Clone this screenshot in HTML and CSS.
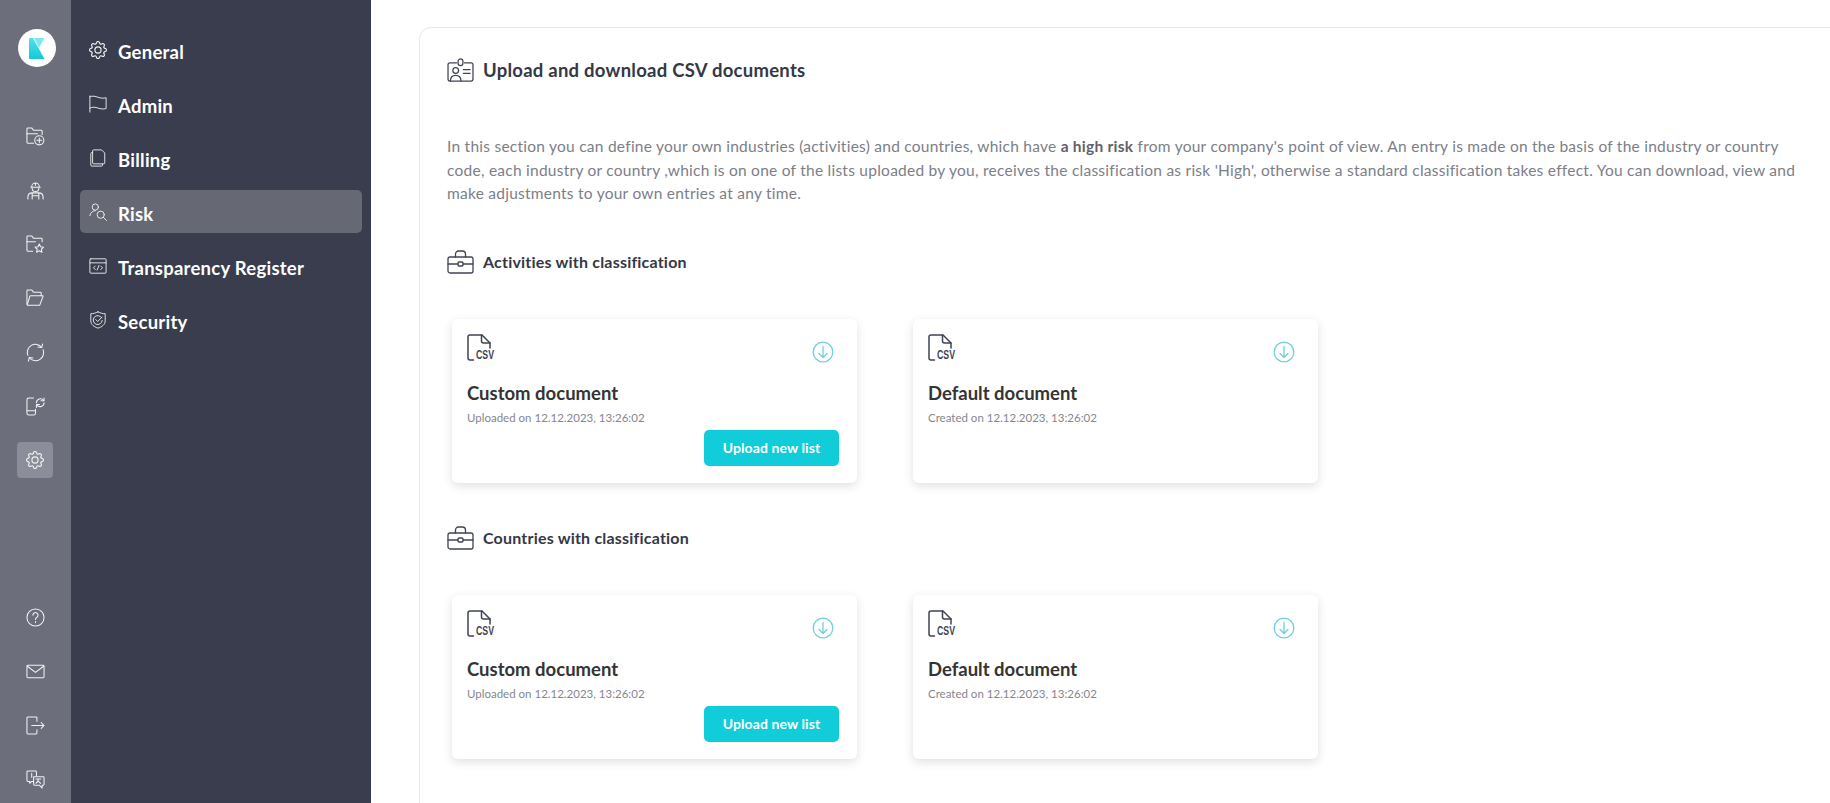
FILE: index.html
```html
<!DOCTYPE html>
<html lang="en">
<head>
<meta charset="utf-8">
<title>Risk settings</title>
<link rel="stylesheet" href="styles.css">
</head>
<body>
<svg class="defs" width="0" height="0" aria-hidden="true">
  <defs>
    <linearGradient id="logo-grad" x1="0" y1="0" x2="0" y2="1">
      <stop offset="0" stop-color="#55dfe9"/>
      <stop offset="1" stop-color="#12c9d7"/>
    </linearGradient>
    <symbol id="gear" viewBox="0 0 16 16">
      <path d="M8 4.754a3.246 3.246 0 1 0 0 6.492 3.246 3.246 0 0 0 0-6.492zM5.754 8a2.246 2.246 0 1 1 4.492 0 2.246 2.246 0 0 1-4.492 0z"/>
      <path d="M9.796 1.343c-.527-1.790-3.065-1.790-3.592 0l-.094.319a.873.873 0 0 1-1.255.52l-.292-.16c-1.640-.892-3.433.902-2.540 2.541l.159.292a.873.873 0 0 1-.52 1.255l-.319.094c-1.790.527-1.790 3.065 0 3.592l.319.094a.873.873 0 0 1 .52 1.255l-.16.292c-.892 1.640.901 3.434 2.541 2.540l.292-.159a.873.873 0 0 1 1.255.52l.094.319c.527 1.790 3.065 1.790 3.592 0l.094-.319a.873.873 0 0 1 1.255-.52l.292.16c1.640.893 3.434-.902 2.540-2.541l-.159-.292a.873.873 0 0 1 .52-1.255l.319-.094c1.790-.527 1.790-3.065 0-3.592l-.319-.094a.873.873 0 0 1-.52-1.255l.16-.292c.893-1.640-.902-3.433-2.541-2.540l-.292.159a.873.873 0 0 1-1.255-.52l-.094-.319zm-2.633.283c.246-.835 1.428-.835 1.674 0l.094.319a1.873 1.873 0 0 0 2.693 1.115l.291-.16c.764-.415 1.600.42 1.184 1.185l-.159.292a1.873 1.873 0 0 0 1.116 2.692l.318.094c.835.246.835 1.428 0 1.674l-.319.094a1.873 1.873 0 0 0-1.115 2.693l.16.291c.415.764-.42 1.600-1.185 1.184l-.291-.159a1.873 1.873 0 0 0-2.693 1.116l-.094.318c-.246.835-1.428.835-1.674 0l-.094-.319a1.873 1.873 0 0 0-2.692-1.115l-.292.16c-.764.415-1.600-.42-1.184-1.185l.159-.291A1.873 1.873 0 0 0 1.945 8.930l-.319-.094c-.835-.246-.835-1.428 0-1.674l.319-.094A1.873 1.873 0 0 0 3.060 4.377l-.16-.292c-.415-.764.42-1.600 1.185-1.184l.292.159a1.873 1.873 0 0 0 2.692-1.115l.094-.319z"/>
    </symbol>
    <symbol id="file-csv" viewBox="0 0 24 27">
      <path d="M6.500 26H3a2 2 0 0 1-2-2V3a2 2 0 0 1 2-2h12l8 8v5"/>
      <path d="M14.500 1v6a2 2 0 0 0 2 2H23"/>
    </symbol>
    <symbol id="case" viewBox="0 0 27 24">
      <rect x="1" y="7" width="25" height="16" rx="2"/>
      <path d="M8.500 7V4a3 3 0 0 1 3-3h4a3 3 0 0 1 3 3v3"/>
      <path d="M1 14h10M16 14h10"/>
      <rect x="11" y="12" width="5" height="4" rx="1"/>
    </symbol>
    <symbol id="dl" viewBox="0 0 22 22">
      <circle cx="11" cy="11" r="9.800"/>
      <path d="M11 5.500v10.500M7 12.500l4 4 4-4"/>
    </symbol>
  </defs>
</svg>
<div class="app">
  <aside class="rail">
    <div class="rail-group">
      <div class="logo">
        <svg viewBox="0 0 16 21" width="16" height="21">
          <path d="M0 1a1 1 0 0 1 1-1h3l11.500 21H1a1 1 0 0 1-1-1z" fill="url(#logo-grad)"/>
          <path d="M5 0h10.500L10 10z" fill="#7de8ef"/>
        </svg>
      </div>
      <div class="rail-icons">
        <a class="rail-btn"><svg class="ri" viewBox="0 0 20 20"><path d="M8 17H2a1 1 0 0 1-1-1V2a1 1 0 0 1 1-1h4l2 2.500h8a1 1 0 0 1 1 1V8"/><path d="M1 7h11"/><circle cx="14" cy="14" r="4.800"/><path d="M14 11.500v5M11.500 14h5"/></svg></a>
        <a class="rail-btn"><svg class="ri" viewBox="0 0 20 20"><path d="M6 6a4 4 0 0 1 8 0M5 6.500h10M10 2v2.500"/><path d="M6.500 7.500a3.500 3.500 0 0 0 7 0"/><path d="M2 19v-2.500a4.500 4.500 0 0 1 4.500-4h7a4.500 4.500 0 0 1 4.500 4V19M6.500 12.500V19M13.500 12.500V19M6.500 15.500h7"/></svg></a>
        <a class="rail-btn"><svg class="ri" viewBox="0 0 20 20"><path d="M7 17H2a1 1 0 0 1-1-1V2a1 1 0 0 1 1-1h4l2 2.500h8a1 1 0 0 1 1 1V7"/><path d="M1 7h9"/><path d="M14 9.500l1.400 2.900 3.100.4-2.300 2.200.6 3.100-2.800-1.500-2.800 1.500.6-3.100-2.300-2.200 3.100-.4z"/></svg></a>
        <a class="rail-btn"><svg class="ri" viewBox="0 0 20 20"><path d="M2 17a1 1 0 0 1-1-1V2a1 1 0 0 1 1-1h4l2 2.500h7a1 1 0 0 1 1 1V7"/><path d="M2 17h12.500l3.500-9.500a.5.5 0 0 0-.5-.5H5a1 1 0 0 0-1 .7L1.500 16"/></svg></a>
        <a class="rail-btn"><svg class="ri" viewBox="0 0 20 20"><path d="M16.500 4.500A8.500 8.500 0 0 0 2 13M3.500 15.500A8.500 8.500 0 0 0 18 7"/><path d="M17.500 1l-1 3.800-3.800-.6M2.500 19l1-3.800 3.800.6"/></svg></a>
        <a class="rail-btn"><svg class="ri" viewBox="0 0 20 20"><path d="M8 1H3a2 2 0 0 0-2 2v14a2 2 0 0 0 2 2h5a2 2 0 0 0 2-2v-4"/><path d="M1 14.500h9"/><path d="M11 6a4.200 4.200 0 0 1 7.500-2.500M19 6a4.200 4.200 0 0 1-7.500 2.500"/><path d="M19 1v3h-3.200M11 11V8h3.200"/></svg></a>
        <a class="rail-btn is-active"><svg class="gear"><use href="#gear"/></svg></a>
      </div>
    </div>
    <div class="rail-icons">
      <a class="rail-btn"><svg class="ri" viewBox="0 0 20 20"><circle cx="10" cy="10" r="9"/><path d="M7.300 7.500a2.700 2.700 0 1 1 4.200 2.300c-1 .6-1.500 1.200-1.500 2.400M10 14.300v1"/></svg></a>
      <a class="rail-btn"><svg class="ri" viewBox="0 0 20 20"><rect x="1" y="3.500" width="18" height="13" rx="1"/><path d="M1.500 4.500L10 11l8.500-6.500"/></svg></a>
      <a class="rail-btn"><svg class="ri" viewBox="0 0 20 20"><path d="M11.500 5.500V2a1 1 0 0 0-1-1H2a1 1 0 0 0-1 1v16a1 1 0 0 0 1 1h8.500a1 1 0 0 0 1-1v-3.500"/><path d="M6 10h13M16 7l3 3-3 3"/></svg></a>
      <a class="rail-btn"><svg class="ri" viewBox="0 0 20 20"><path d="M8 12H6l-2 2v-2H2a1 1 0 0 1-1-1V2a1 1 0 0 1 1-1h8a1 1 0 0 1 1 1v4"/><path d="M8 7h10a1 1 0 0 1 1 1v7a1 1 0 0 1-1 1h-1v3l-3-3H9a1 1 0 0 1-1-1z"/><path d="M6 3.500v4M10.500 9.500h5M13 9.500c0 2-1 3.500-2.500 4.500M13 11.500c.5 1 1.500 2 2.500 2.500"/></svg></a>
    </div>
  </aside>

  <nav class="nav">
    <a class="nav-item"><svg class="gear"><use href="#gear"/></svg><span>General</span></a>
    <a class="nav-item"><svg class="ni" viewBox="0 0 20 20"><path d="M1 19V1M1 2c3-1.500 6-.5 9 .5s6 1.500 9 .5v12c-3 1-6 .5-9-.5S4 13 1 14.500"/></svg><span>Admin</span></a>
    <a class="nav-item"><svg class="ni" viewBox="0 0 20 20"><path d="M5 16.500a1 1 0 0 1-1-1V2a1 1 0 0 1 1-1h9l3.500 3.500V15.500a1 1 0 0 1-1 1z"/><path d="M4 4H3a1 1 0 0 0-1 1v13a1 1 0 0 0 1 1h11a1 1 0 0 0 1-1v-1.500"/></svg><span>Billing</span></a>
    <a class="nav-item is-active"><svg class="ni" viewBox="0 0 20 20"><circle cx="7" cy="4.500" r="3.500"/><path d="M1 14a6 6 0 0 1 6-5.500"/><circle cx="13" cy="13" r="4"/><path d="M16 16l3.500 3.500"/></svg><span>Risk</span></a>
    <a class="nav-item"><svg class="ni" viewBox="0 0 20 20"><rect x="1" y="2" width="18" height="16" rx="1"/><path d="M1 6.500h18M7 10l-2 2 2 2M13 10l2 2-2 2M11 9.500l-2 5"/></svg><span>Transparency Register</span></a>
    <a class="nav-item"><svg class="ni" viewBox="0 0 20 20"><path d="M10 1c3 1.500 5.500 2 8 2v8c0 4-4 7-8 8-4-1-8-4-8-8V3c2.500 0 5-.5 8-2z"/><path d="M14 7.500a5 5 0 1 0 .7 3M7.500 9.500l2.200 2.200 4.800-5"/></svg><span>Security</span></a>
  </nav>

  <main class="main">
    <section class="panel">
      <header class="panel-head">
        <svg class="hi" viewBox="0 0 28 25"><path d="M10 5H3a2 2 0 0 0-2 2v15a2 2 0 0 0 2 2h22a2 2 0 0 0 2-2V7a2 2 0 0 0-2-2h-7"/><rect x="11.500" y="1" width="5" height="7" rx="2.500"/><circle cx="9" cy="13" r="3"/><path d="M3.500 24c0-4 2.500-6 5.500-6s5.500 2 5.500 6M17 12h7M17 16h7"/></svg>
        <h1>Upload and download CSV documents</h1>
      </header>
      <p class="intro">In this section you can define your own industries (activities) and countries, which have <b>a high risk</b> from your company's point of view. An entry is made on the basis of the industry or country<br>code, each industry or country ,which is on one of the lists uploaded by you, receives the classification as risk 'High', otherwise a standard classification takes effect. You can download, view and<br>make adjustments to your own entries at any time.</p>

      <div class="section">
        <header class="section-head"><svg class="hi"><use href="#case"/></svg><h2>Activities with classification</h2></header>
        <div class="cards">
          <article class="card">
            <div class="card-top"><span class="csv"><svg class="file"><use href="#file-csv"/></svg><span class="csv-label">CSV</span></span><svg class="dl"><use href="#dl"/></svg></div>
            <h3>Custom document</h3>
            <p class="date">Uploaded on 12.12.2023, 13:26:02</p>
            <div class="card-actions"><button class="upload">Upload new list</button></div>
          </article>
          <article class="card">
            <div class="card-top"><span class="csv"><svg class="file"><use href="#file-csv"/></svg><span class="csv-label">CSV</span></span><svg class="dl"><use href="#dl"/></svg></div>
            <h3>Default document</h3>
            <p class="date">Created on 12.12.2023, 13:26:02</p>
          </article>
        </div>
      </div>

      <div class="section">
        <header class="section-head"><svg class="hi"><use href="#case"/></svg><h2>Countries with classification</h2></header>
        <div class="cards">
          <article class="card">
            <div class="card-top"><span class="csv"><svg class="file"><use href="#file-csv"/></svg><span class="csv-label">CSV</span></span><svg class="dl"><use href="#dl"/></svg></div>
            <h3>Custom document</h3>
            <p class="date">Uploaded on 12.12.2023, 13:26:02</p>
            <div class="card-actions"><button class="upload">Upload new list</button></div>
          </article>
          <article class="card">
            <div class="card-top"><span class="csv"><svg class="file"><use href="#file-csv"/></svg><span class="csv-label">CSV</span></span><svg class="dl"><use href="#dl"/></svg></div>
            <h3>Default document</h3>
            <p class="date">Created on 12.12.2023, 13:26:02</p>
          </article>
        </div>
      </div>
    </section>
  </main>
</div>
</body>
</html>
```
FILE: styles.css
```css
* { box-sizing: border-box; }
html, body { margin: 0; height: 100%; overflow: hidden; }
body { font-family: "Lato", "Noto Sans", sans-serif; color: #343846; background: #fff; }
.defs { position: absolute; }
.app { display: flex; height: 803px; }

.rail { width: 71px; flex: none; background: #6c6f7b; display: flex; flex-direction: column; justify-content: space-between; padding: 29px 0 6px; }
.rail-group { display: flex; flex-direction: column; }
.logo { width: 38px; height: 38px; margin-left: 18px; border-radius: 50%; background: #fff; display: flex; align-items: center; justify-content: center; }
.rail-icons { display: flex; flex-direction: column; align-items: center; gap: 18px; }
.rail-group .rail-icons { margin-top: 51px; }
.rail-btn { width: 36px; height: 36px; border-radius: 4px; display: flex; align-items: center; justify-content: center; margin-right: 1px; }
.rail-btn.is-active { background: #8b8e98; }
.ri { width: 19px; height: 19px; fill: none; stroke: #f2f2f4; stroke-width: 1.100; stroke-linecap: round; stroke-linejoin: round; }
.gear { width: 18px; height: 18px; flex: none; fill: #f2f2f4; }

.nav { width: 300px; flex: none; background: #393d4d; padding: 28px 9px 0; display: flex; flex-direction: column; gap: 11px; }
.nav-item { height: 43px; display: flex; align-items: center; gap: 11px; padding: 0 0 0 9px; border-radius: 5px; color: #fff; font-size: 18.500px; font-weight: 700; letter-spacing: .25px; }
.nav-item span { padding-top: 4px; }
.nav-item.is-active { background: #666974; }
.ni { width: 18px; height: 18px; flex: none; fill: none; stroke: #f2f2f4; stroke-width: 1; stroke-linecap: round; stroke-linejoin: round; }

.main { flex: 1; min-width: 0; padding: 27px 0 0 48px; overflow: hidden; }
.panel { margin-right: -20px; height: 900px; border: 1px solid #e6e6e8; border-radius: 12px; padding: 29px 47px 0 27px; }
.panel-head { display: flex; align-items: center; gap: 9px; height: 26px; }
.panel-head h1 { margin: 0; font-size: 18.500px; font-weight: 700; letter-spacing: .25px; color: #343846; }
.hi { width: 27px; height: 24px; flex: none; fill: none; stroke: #3f4354; stroke-width: 1.300; stroke-linecap: round; stroke-linejoin: round; }
.intro { margin: 52px 0 0; padding-bottom: 1px; font-size: 15.500px; line-height: 23.500px; letter-spacing: .25px; color: #7c7e88; white-space: nowrap; }
.intro b { font-weight: 700; color: #5f616b; }

.section-head { display: flex; align-items: center; gap: 9px; height: 26px; margin-top: 42px; }
.section-head h2 { margin: 0; font-size: 16px; font-weight: 700; letter-spacing: .2px; color: #343846; }
.cards { display: flex; gap: 56px; margin: 44px 0 0 5px; }
.card { width: 405px; height: 164px; padding: 15px 15px 0; background: #fff; border-radius: 6px; box-shadow: 0 3px 10px rgba(60, 64, 80, .16); display: flex; flex-direction: column; }
.card-top { display: flex; justify-content: space-between; align-items: flex-start; height: 27px; }
.csv { position: relative; width: 27px; height: 27px; display: block; }
.file { width: 24px; height: 27px; display: block; fill: none; stroke: #3f4354; stroke-width: 1.500; stroke-linecap: round; stroke-linejoin: round; }
.csv-label { position: absolute; left: 9px; bottom: -1px; font-family: "Liberation Sans", sans-serif; font-size: 12.500px; font-weight: 700; line-height: 13px; color: #3f4354; transform: scaleX(.7); transform-origin: left bottom; }
.dl { width: 22px; height: 22px; margin: 7px 8px 0 0; fill: none; stroke: #6fd0dc; stroke-width: 1.300; stroke-linecap: round; stroke-linejoin: round; }
.card h3 { margin: 20px 0 0; font-size: 18.500px; line-height: 25px; font-weight: 700; color: #343434; }
.date { margin: 5px 0 0; font-size: 11.500px; line-height: 14px; color: #85868f; }
.card-actions { display: flex; justify-content: flex-end; margin: 5px 3px 0 0; }
.upload { width: 135px; height: 36px; border: 0; border-radius: 5px; background: #11ccd9; color: #fff; font: 700 14px "Lato", "Noto Sans", sans-serif; letter-spacing: .1px; padding: 0; }
```
